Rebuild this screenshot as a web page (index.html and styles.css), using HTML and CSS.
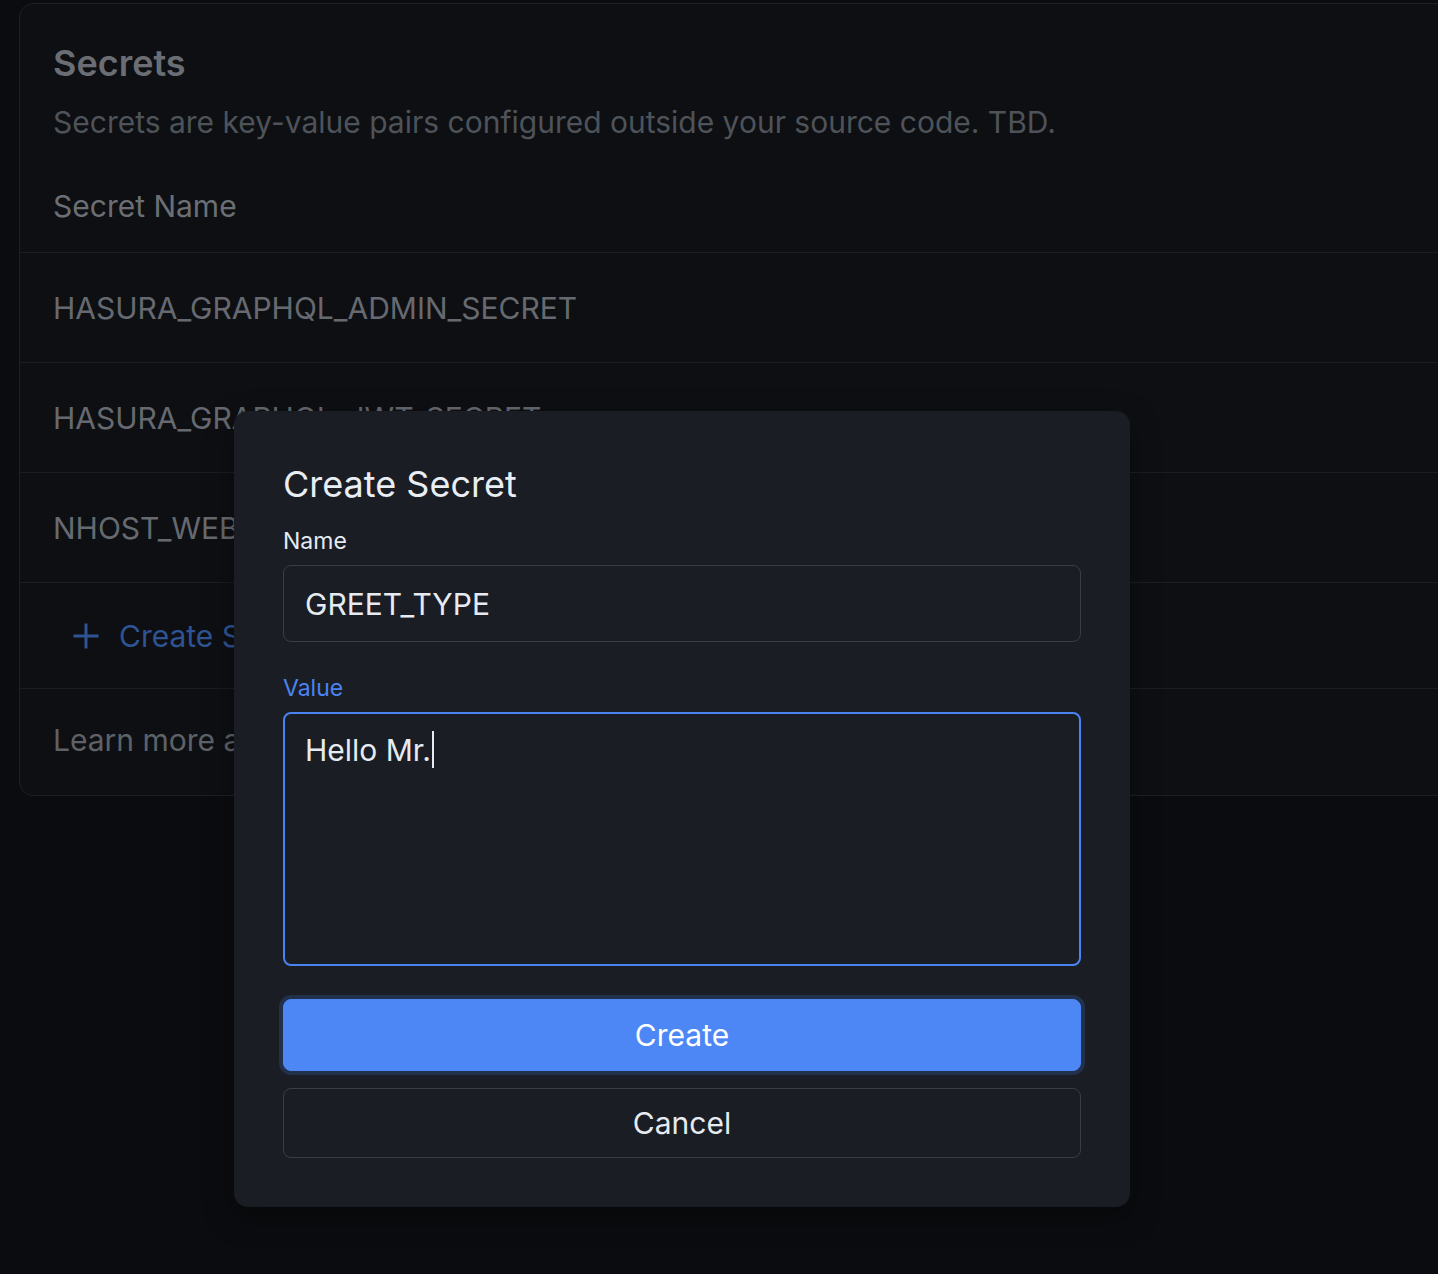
FILE: index.html
```html
<!DOCTYPE html>
<html lang="en">
<head>
<meta charset="utf-8">
<title>Secrets</title>
<link rel="stylesheet" href="styles.css">
</head>
<body>
<main class="page">
  <section class="card">
    <header class="card-head">
      <h1 class="card-title">Secrets</h1>
      <p class="card-desc">Secrets are key-value pairs configured outside your source code. TBD.</p>
      <div class="col-head">Secret Name</div>
    </header>
    <div class="row">HASURA_GRAPHQL_ADMIN_SECRET</div>
    <div class="row">HASURA_GRAPHQL_JWT_SECRET</div>
    <div class="row">NHOST_WEBHOOK_SECRET</div>
    <div class="row row-action">
      <svg class="plus" viewBox="0 0 28 28" aria-hidden="true"><path d="M14 1.5v25M1.5 14h25" stroke="currentColor" stroke-width="3" stroke-linecap="butt" fill="none"/></svg>
      <span>Create Secret</span>
    </div>
    <div class="row row-foot">Learn more about Secrets</div>
  </section>

  <div class="dialog" role="dialog" aria-labelledby="dlg-title">
    <h2 class="dialog-title" id="dlg-title">Create Secret</h2>
    <div class="field">
      <label class="label">Name</label>
      <div class="input">GREET_TYPE</div>
    </div>
    <div class="field field-focus">
      <label class="label label-active">Value</label>
      <div class="textarea">Hello Mr.<span class="caret"></span></div>
    </div>
    <div class="actions">
      <button class="btn btn-primary" type="button">Create</button>
      <button class="btn btn-outline" type="button">Cancel</button>
    </div>
  </div>
</main>
</body>
</html>
```
FILE: styles.css
```css
* { box-sizing: border-box; }

html, body {
  margin: 0;
  padding: 0;
  height: 100%;
}

body {
  background: #0b0c0f;
  font-family: Inter, "Noto Sans", "Liberation Sans", sans-serif;
  overflow: hidden;
}

.page {
  position: relative;
  padding: 3px 0 0 19px;
  height: 1274px;
}

.card {
  width: 1480px;
  background: #0e0f13;
  border: 1px solid #1d1f24;
  border-radius: 14px;
  overflow: hidden;
}

.card-head {
  padding: 37px 33px 26px;
  border-bottom: 1px solid #1b1d22;
}

.card-title {
  margin: 0;
  font-size: 36px;
  line-height: 44px;
  font-weight: 600;
  color: #6a6e74;
}

.card-desc {
  margin: 17px 0 0;
  font-size: 30px;
  line-height: 40px;
  color: #4d5359;
}

.col-head {
  margin-top: 44px;
  font-size: 30px;
  line-height: 40px;
  color: #6b6f74;
}

.row {
  height: 110px;
  display: flex;
  align-items: center;
  padding: 0 33px;
  font-size: 30px;
  color: #666a70;
  border-bottom: 1px solid #1b1d22;
}

.row-action {
  height: 106px;
  padding-left: 52px;
  gap: 19px;
  color: #2e5494;
}

.plus {
  width: 28px;
  height: 28px;
  flex: none;
}

.row-foot {
  height: 106px;
  padding-bottom: 5px;
  border-bottom: none;
  color: #5e6267;
}

/* dialog */
.dialog {
  position: absolute;
  left: 234px;
  top: 411px;
  width: 896px;
  padding: 51px 49px 49px;
  background: #1a1d24;
  border-radius: 14px;
  box-shadow: 0 10px 30px rgba(0, 0, 0, 0.35);
  display: flex;
  flex-direction: column;
}

.dialog-title {
  margin: 0;
  font-size: 36px;
  line-height: 44px;
  font-weight: 400;
  color: #e9eef4;
}

.field {
  display: flex;
  flex-direction: column;
  gap: 10px;
  margin-top: 21px;
}

.field-focus {
  margin-top: 32px;
}

.label {
  font-size: 23px;
  line-height: 28px;
  color: #e6ebf1;
}

.label-active {
  color: #4a84f0;
}

.input {
  height: 77px;
  border: 1px solid #3a3d45;
  border-radius: 8px;
  padding: 0 21px;
  display: flex;
  align-items: center;
  font-size: 30px;
  color: #e6ebf1;
}

.textarea {
  height: 254px;
  border: 2px solid #4a84f0;
  border-radius: 8px;
  padding: 17px 20px;
  font-size: 30px;
  line-height: 38px;
  color: #e6ebf1;
}

.caret {
  display: inline-block;
  width: 2px;
  height: 37px;
  margin-left: 1px;
  vertical-align: top;
  background: #e6ebf1;
}

.actions {
  display: flex;
  flex-direction: column;
  gap: 17px;
  margin-top: 33px;
}

.btn {
  font-family: inherit;
  font-size: 30px;
  border-radius: 8px;
  cursor: pointer;
  width: 100%;
}

.btn-primary {
  height: 72px;
  background: #4d86f5;
  border: 1px solid #4d86f5;
  color: #ffffff;
  box-shadow: 0 0 0 4px #22314b;
}

.btn-outline {
  height: 70px;
  background: transparent;
  border: 1px solid #3a3d45;
  color: #e6ebf1;
}
```
